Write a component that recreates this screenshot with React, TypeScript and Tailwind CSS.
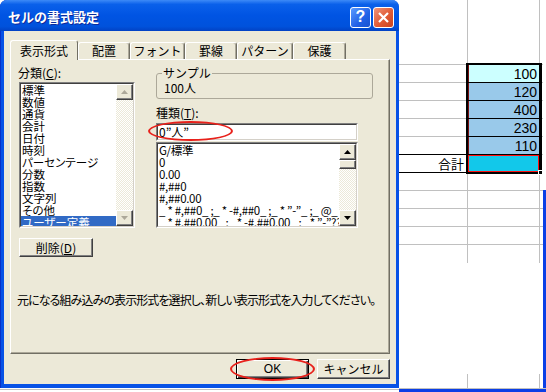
import React from "react";

const ui = "font-['Noto_Sans_CJK_JP','Noto_Sans_CJK_SC',sans-serif]";
const raised =
  "border border-t-white border-l-white border-r-[#404040] border-b-[#404040] shadow-[inset_-1px_-1px_0_#808080]";
const hatch =
  "bg-[conic-gradient(#ece9d8_25%,#fff_0_50%,#ece9d8_0_75%,#fff_0)] bg-[length:2px_2px]";

const Sunken = ({ className, children }: { className: string; children: React.ReactNode }) => (
  <div className={`border border-t-[#808080] border-l-[#808080] border-r-white border-b-white ${className}`}>
    <div className="h-full border border-t-[#404040] border-l-[#404040] border-r-[#d4d0c8] border-b-[#d4d0c8] bg-white flex">
      {children}
    </div>
  </div>
);

const Arrow = ({ up, disabled }: { up?: boolean; disabled?: boolean }) => (
  <div className={`w-[17px] h-[16px] shrink-0 bg-[#ece9d8] flex items-center justify-center ${raised}`}>
    <svg width="7" height="4" viewBox="0 0 7 4">
      <polygon points={up ? "3.5,0 7,4 0,4" : "0,0 7,0 3.5,4"} fill={disabled ? "#aca899" : "#000"} />
    </svg>
  </div>
);

const Scrollbar = ({ disabled, thumb }: { disabled?: boolean; thumb?: boolean }) => (
  <div className="w-[17px] flex flex-col shrink-0">
    <Arrow up disabled={disabled} />
    <div className={`flex-1 ${hatch}`}>
      {thumb && <div className={`h-[9px] bg-[#ece9d8] ${raised}`} />}
    </div>
    <Arrow disabled={disabled} />
  </div>
);

const categories = ["標準", "数値", "通貨", "会計", "日付", "時刻", "パーセンテージ", "分数", "指数", "文字列", "その他", "ユーザー定義"];
const formats = [
  "G/標準",
  "0",
  "0.00",
  "#,##0",
  "#,##0.00",
  "_ * #,##0_ ;_ * -#,##0_ ;_ * ”-”_ ;_ @_ ",
  "_ * #,##0.00_ ;_ * -#,##0.00_ ;_ * ”-”??_ ;_ @_ ",
];

const tabs = [
  { label: "配置", w: "w-[52px]" },
  { label: "フォント", w: "w-[55px]" },
  { label: "罫線", w: "w-[52px]" },
  { label: "パターン", w: "w-[56px]" },
  { label: "保護", w: "w-[53px]" },
];

const Dialog = () => (
  <div className="w-[399px] h-[388px] shrink-0 flex flex-col bg-[#0752e6] rounded-t-[7px] shadow-[inset_1px_0_0_#0831c8]">
    {/* title bar */}
    <div className="h-[31px] shrink-0 flex items-center pt-[3px] pl-[8px] pr-[5px] rounded-t-[7px] bg-[linear-gradient(180deg,#3d8af7_0%,#0a60ea_14%,#0054e3_50%,#0052dc_85%,#0242c4_100%)]">
      <span className="flex-1 text-white font-bold text-[13px] leading-[16px] [text-shadow:1px_1px_#0b2a9b]">セルの書式設定</span>
      <div className="flex gap-[2px]">
        <div className="w-[21px] h-[21px] rounded-[3px] border border-white bg-[linear-gradient(135deg,#5b9cff,#2160e6_60%,#1a52d0)] flex items-center justify-center text-white font-bold text-[16px] leading-none font-['Liberation_Sans',sans-serif]">
          ?
        </div>
        <div className="w-[21px] h-[21px] rounded-[3px] border border-white bg-[linear-gradient(135deg,#f0957a,#e05a35_55%,#c8431f)] flex items-center justify-center">
          <svg width="11" height="11" viewBox="0 0 11 11">
            <path d="M1 1 L10 10 M10 1 L1 10" stroke="#fff" strokeWidth="2.2" />
          </svg>
        </div>
      </div>
    </div>

    {/* body */}
    <div className="h-[353px] shrink-0 ml-[4px] mr-[3px] bg-[#ece9d8] px-[6px] pt-[9px] flex flex-col overflow-hidden">
      <div className="h-[19px] shrink-0 flex items-end text-[12px]">
        <div className="relative z-10 -mb-px w-[68px] h-[20px] bg-[#ece9d8] border-t border-l border-white border-r border-r-[#716f64] rounded-t-[3px] flex items-center justify-center">
          表示形式
        </div>
        {tabs.map((t) => (
          <div
            key={t.label}
            className={`${t.w} h-[17px] border-t border-l border-white border-r border-r-[#716f64] rounded-t-[3px] shadow-[inset_-1px_0_0_#aca899] flex items-center justify-center`}
          >
            {t.label}
          </div>
        ))}
      </div>

      <div className="h-[295px] shrink-0 border-t border-l border-white border-r border-b border-r-[#716f64] border-b-[#716f64] shadow-[inset_-1px_-1px_0_#aca899] pl-[7px] pt-[5px] text-[12px] flex flex-col">
        <div className="flex">
          {/* left column */}
          <div className="w-[117px] flex flex-col">
            <div className="h-[16px] leading-[16px]">
              分類(<span className="underline">C</span>):
            </div>
            <Sunken className="ml-px mt-px w-[116px] h-[146px]">
              <div className="flex-1 overflow-hidden">
                {categories.map((c, i) => (
                  <div
                    key={c}
                    className={`leading-[12px] h-[12px] pl-px text-[11.5px] whitespace-nowrap [font-feature-settings:'palt'] ${i === categories.length - 1 ? "bg-[#316ac5] text-white" : ""}`}
                  >
                    {c}
                  </div>
                ))}
              </div>
              <Scrollbar disabled />
            </Sunken>
            <div className={`ml-px mt-[10px] w-[74px] h-[19px] bg-[#ece9d8] flex items-center justify-center ${raised}`}>
              削除(<span className="underline">D</span>)
            </div>
          </div>

          {/* right column */}
          <div className="ml-[21px] w-[217px] flex flex-col">
            <fieldset className="h-[34px] border border-[#aca899] rounded-[3px]">
              <legend className="ml-[5px] px-px leading-[16px]">サンプル</legend>
              <div className="pl-[7px] leading-[14px]">100人</div>
            </fieldset>
            <div className="mt-[6px] h-[16px] leading-[16px]">
              種類(<span className="underline">T</span>):
            </div>
            <div className="relative mt-[2px]">
              <Sunken className="w-[202px] h-[18px]">
                <div className="pl-px leading-[14px]">0”人”</div>
              </Sunken>
              <div className="absolute -left-[8px] -top-[2px] w-[85px] h-[20px] rounded-[50%] border-2 border-[#e8211b]" />
            </div>
            <Sunken className="mt-px w-[202px] h-[86px]">
              <div className="flex-1 overflow-hidden">
                {formats.map((f) => (
                  <div key={f} className="leading-[12px] h-[12px] pl-px text-[11.5px] whitespace-pre tracking-[-0.3px]">
                    {f}
                  </div>
                ))}
              </div>
              <Scrollbar thumb />
            </Sunken>
          </div>
        </div>
        <div className="mt-[35px] -ml-px leading-[16px] whitespace-nowrap tracking-[-0.9px] [font-feature-settings:'palt']">
          元になる組み込みの表示形式を選択し、新しい表示形式を入力してください。
        </div>
      </div>

      <div className="mt-[5px] flex justify-end gap-[8px] text-[12px]">
        <div className="relative">
          <div className="w-[73px] h-[20px] border border-black shadow-[inset_1px_1px_0_#fff,inset_-1px_-1px_0_#404040,inset_-2px_-2px_0_#808080] flex items-center justify-center font-['Liberation_Sans',sans-serif]">
            OK
          </div>
          <div className="absolute -left-[6px] -top-[2px] w-[85px] h-[24px] rounded-[50%] border-2 border-[#e8211b]" />
        </div>
        <div className={`w-[73px] h-[20px] flex items-center justify-center ${raised}`}>キャンセル</div>
      </div>
    </div>
  </div>
);

const grey = "border-[#c0c0c0]";

const SheetRow = ({
  a,
  b,
  aLine = grey,
  bClass,
}: {
  a?: string;
  b?: string;
  aLine?: string;
  bClass?: string;
}) => (
  <div className="h-[18px] flex shrink-0">
    <div className={`w-[69px] border-r border-r-[#c0c0c0] border-b ${aLine} text-right pr-[3px] text-[13px] leading-[17px]`}>{a}</div>
    <div className={`w-[72px] border-r border-b ${bClass ?? grey} text-right pr-[2px] text-[14px] leading-[18px] font-['Liberation_Sans',sans-serif]`}>{b}</div>
    <div className={`flex-1 border-b ${grey}`} />
  </div>
);

const Sheet = () => (
  <div className="flex-1 h-[388px] flex">
    <div className="flex-1 relative flex flex-col bg-white">
      <div className="h-[65px] flex shrink-0">
        <div className={`w-[69px] border-r border-b ${grey}`} />
        <div className={`w-[72px] border-r border-b ${grey}`} />
        <div className={`flex-1 border-b ${grey}`} />
      </div>
      <SheetRow b="100" bClass="border-black bg-[#ccffff] shadow-[inset_1px_0_0_#7a1010]" />
      <SheetRow b="120" bClass="border-black bg-[#99c9ea] shadow-[inset_1px_0_0_#7a1010]" />
      <SheetRow b="400" bClass="border-black bg-[#99c9ea] shadow-[inset_1px_0_0_#7a1010]" />
      <SheetRow b="230" bClass="border-black bg-[#99c9ea] shadow-[inset_1px_0_0_#7a1010]" />
      <SheetRow b="110" aLine="border-black" bClass="border-black bg-[#99c9ea] shadow-[inset_1px_0_0_#7a1010]" />
      <SheetRow a="合計" aLine="border-black" bClass="border-black bg-[#12c8ea] shadow-[inset_0_0_0_1px_#ff1010]" />
      <SheetRow />
      <SheetRow />
      <SheetRow />
      <SheetRow />
      <div className="h-[18px] flex shrink-0">
        <div className={`w-[69px] border-r ${grey}`} />
        <div className={`w-[72px] border-r ${grey}`} />
      </div>
      <div className="flex-1 bg-white" />
      <div className="h-[14px] flex shrink-0 bg-white">
        <div className={`w-[69px] border-r ${grey}`} />
        <div className={`w-[72px] border-r ${grey}`} />
      </div>
      {/* selection frame over the cells */}
      <div className="absolute left-[67px] top-[63px] w-[76px] h-[111px] border-2 border-black pointer-events-none" />
      <div className="absolute left-[139px] top-[170px] w-[5px] h-[5px] bg-black border border-white" />
    </div>
    <div className="w-[3px] shrink-0 flex flex-col">
      <div className="h-[190px] bg-white" />
      <div className="flex-1 bg-[#0b3fe6]" />
    </div>
  </div>
);

export default function App() {
  return (
    <div className={`w-[546px] h-[392px] overflow-hidden bg-white flex flex-col ${ui}`}>
      <div className="h-[388px] shrink-0 flex">
        <Dialog />
        <Sheet />
      </div>
      <div className="h-[4px] shrink-0 flex">
        <div className={`w-[399px] mt-px border-t ${grey}`} />
        <div className="flex-1 border-t border-[#c0c0c0] bg-[#0b3fe6]" />
      </div>
    </div>
  );
}
